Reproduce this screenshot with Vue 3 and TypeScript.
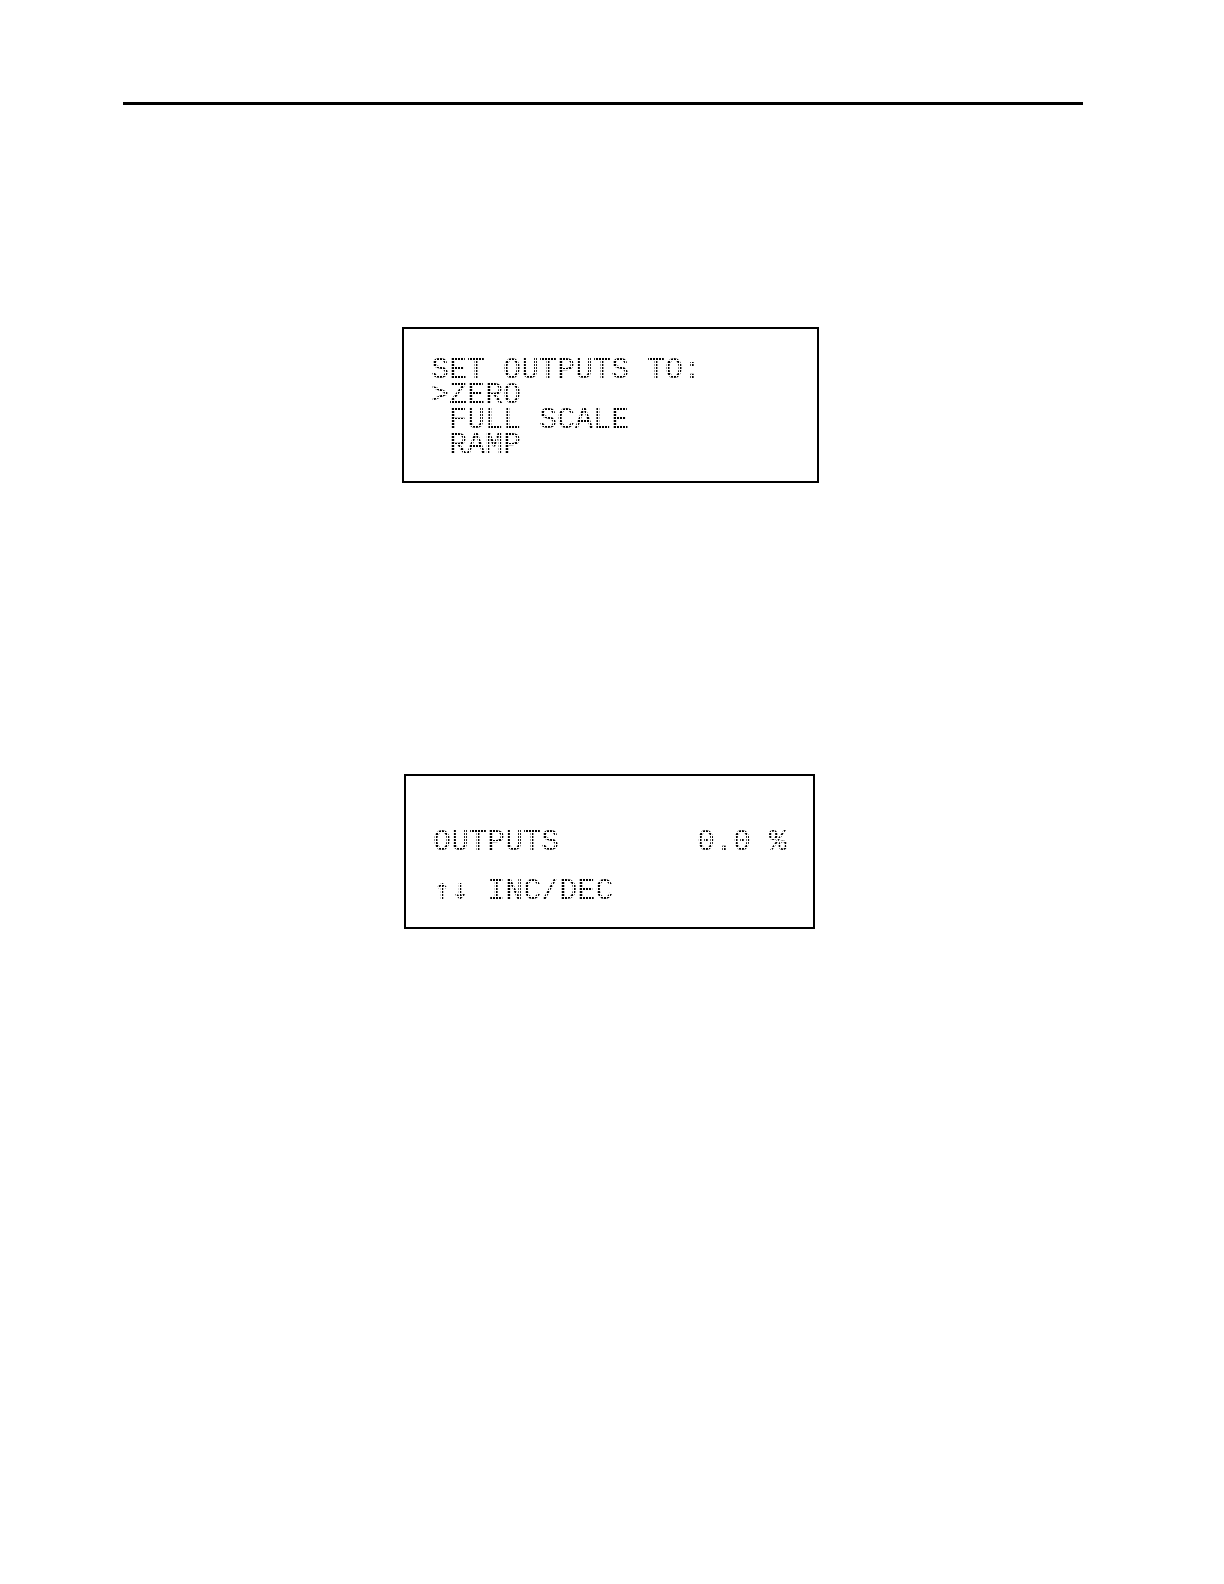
<script setup lang="ts">
interface Row {
  keys?: string
  label: string
  value?: string
}

const menuRows: string[] = ['SET OUTPUTS TO:', '>ZERO', ' FULL SCALE', ' RAMP']
const statusRows: Row[] = [
  { label: 'OUTPUTS', value: '0.0 %' },
  { keys: '↑↓', label: ' INC/DEC' },
]
</script>

<template>
  <main class="page">
    <hr class="rule" />
    <section class="display menu" aria-label="Set outputs menu">
      <div v-for="row in menuRows" :key="row" class="line">
        <span class="dots">{{ row }}</span>
      </div>
    </section>
    <section class="display status" aria-label="Output level">
      <div v-for="row in statusRows" :key="row.label" class="line">
        <span class="dots"><span v-if="row.keys" class="keys">{{ row.keys }}</span>{{ row.label }}</span>
        <span v-if="row.value" class="dots">{{ row.value }}</span>
      </div>
    </section>
  </main>
</template>

<style>
body {
  margin: 0;
  background: #fff;
}
</style>

<style scoped>
.page {
  padding: 102px 141px 102px 123px;
}

.rule {
  height: 3px;
  margin: 0;
  border: 0;
  background: #000;
}

.display {
  box-sizing: border-box;
  border: 2px solid #000;
  font-family: "Liberation Mono", monospace;
  font-size: 30px;
  line-height: 25px;
}

.menu {
  max-width: 417px;
  margin: 222px 0 0 279px;
  padding: 29px 26px 23px 27px;
}

.status {
  display: flex;
  flex-direction: column;
  gap: 24px;
  max-width: 411px;
  margin: 291px 0 0 281px;
  padding: 54px 26px 23px 27px;
}

.line {
  display: flex;
  justify-content: space-between;
  height: 25px;
}

/* LCD look: the letters are filled with a grid of 2px dots on a 3px pitch */
.dots {
  white-space: pre;
  color: transparent;
  background-color: #000;
  background-image:
    linear-gradient(to right, #fff 1px, transparent 1px),
    linear-gradient(to bottom, #fff 1px, transparent 1px);
  background-position: 2px 2px;
  background-size: 3px 3px;
  background-clip: text;
  -webkit-background-clip: text;
}

.keys {
  font-family: "DejaVu Sans Mono", monospace;
  line-height: 0;
}
</style>
